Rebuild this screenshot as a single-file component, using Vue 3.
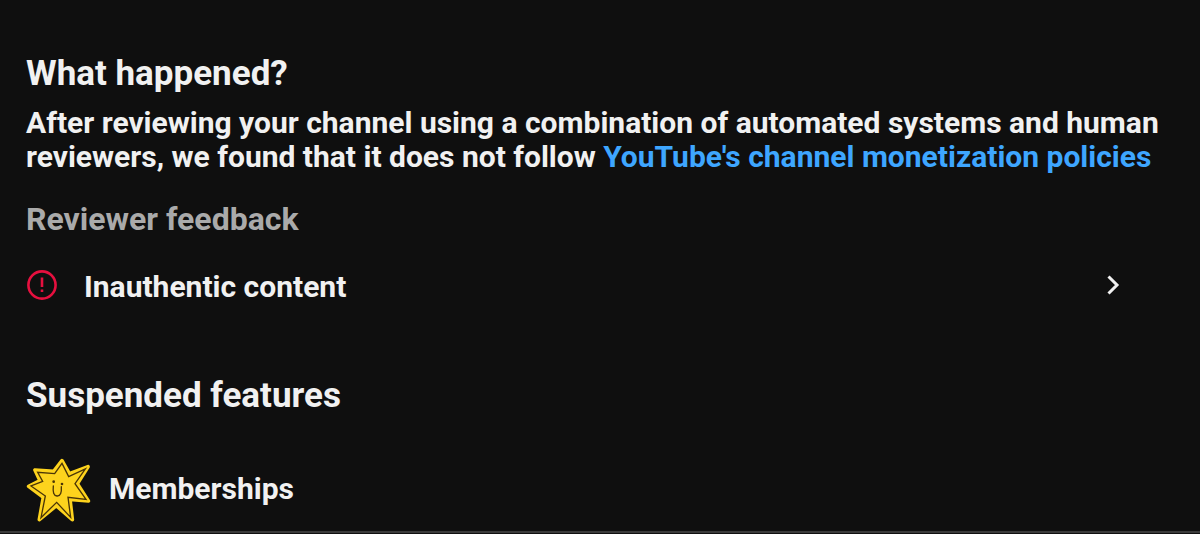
<script setup>
const policyUrl = '#monetization-policies'
</script>

<template>
  <main class="page">
    <section class="summary">
      <h2 class="title">What happened?</h2>
      <p class="body">
        After reviewing your channel using a combination of automated systems and human
        reviewers, we found that it does not follow
        <a class="link" :href="policyUrl">YouTube's channel monetization policies</a>
      </p>
    </section>

    <section class="feedback">
      <h3 class="subtitle">Reviewer feedback</h3>
      <button class="issue" type="button">
        <svg class="alert" viewBox="0 0 30 30" aria-hidden="true">
          <circle cx="15" cy="15" r="13.6" />
          <path d="M15 7.500v9.500M15 19.500v2.600" />
        </svg>
        <span class="label">Inauthentic content</span>
        <svg class="chevron" viewBox="0 0 14 22" aria-hidden="true">
          <path d="M2.500 2.500 11 11l-8.500 8.500" />
        </svg>
      </button>
    </section>

    <section class="features">
      <h2 class="title">Suspended features</h2>
      <div class="feature">
        <svg class="star" viewBox="78 54 195 192" aria-hidden="true">
          <path
            class="star-edge"
            d="M186 62 208 101 264 80 232 131 265 183 210 178 217 239 169 197 118 239 130 172 86 139 120 122 105 90 161 94Z"
          />
          <path
            class="star-line"
            d="M186 70 206 110 256 87 225 131 258 178 204 172 212 232 170 187 123 233 136 168 93 138 128 124 113 97 164 101Z"
          />
          <path class="smile" d="M160 138C158 157 161 167 171 168 182 169 185 157 184 140" />
          <circle class="eye" cx="161" cy="125" r="4" />
          <circle class="eye" cx="186" cy="132" r="4" />
        </svg>
        <span class="label">Memberships</span>
      </div>
    </section>
  </main>
</template>

<style>
body {
  margin: 0;
  background: #0f0f0f;
}
</style>

<style scoped>
.page {
  padding: 53px 26px 0;
  border-bottom: 2px solid #3a3a3a;
  color: #f1f1f1;
  font-family: Roboto, "Liberation Sans", sans-serif;
  font-weight: 700;
}

.title,
.subtitle,
.body {
  margin: 0;
  font-weight: 700;
}

.title {
  font-size: 35px;
  line-height: 42px;
}

.body {
  margin-top: 11px;
  font-size: 30px;
  line-height: 34px;
}

.link {
  color: #3ea6ff;
  text-decoration: none;
}

.feedback {
  margin-top: 24px;
}

.subtitle {
  color: #aaaaaa;
  font-size: 32px;
  line-height: 42px;
}

.issue {
  display: flex;
  align-items: center;
  width: 100%;
  margin-top: 26px;
  padding: 0 54px 0 1px;
  border: 0;
  background: none;
  color: inherit;
  font: inherit;
  text-align: left;
  cursor: pointer;
}

.label {
  font-size: 30px;
  line-height: 42px;
}

.alert {
  width: 30px;
  height: 30px;
  margin-right: 27px;
  margin-bottom: 4px;
  fill: none;
  stroke: #e6103f;
  stroke-width: 2.6;
}

.chevron {
  width: 14px;
  height: 22px;
  margin-left: auto;
  margin-bottom: 4px;
  fill: none;
  stroke: #f1f1f1;
  stroke-width: 3;
}

.features {
  margin-top: 67px;
}

.feature {
  display: flex;
  align-items: center;
  gap: 18px;
  margin-top: 41px;
  padding-bottom: 9px;
}

.feature .label {
  padding-bottom: 2px;
}

.star {
  width: 65px;
  height: 64px;
}

.star-edge {
  fill: #fdd31d;
  stroke: #fdd31d;
  stroke-width: 11;
  stroke-linejoin: round;
}

.star-line,
.smile {
  fill: none;
  stroke: #4a3507;
  stroke-width: 4;
  stroke-linecap: round;
}

.eye {
  fill: #4a3507;
}
</style>
